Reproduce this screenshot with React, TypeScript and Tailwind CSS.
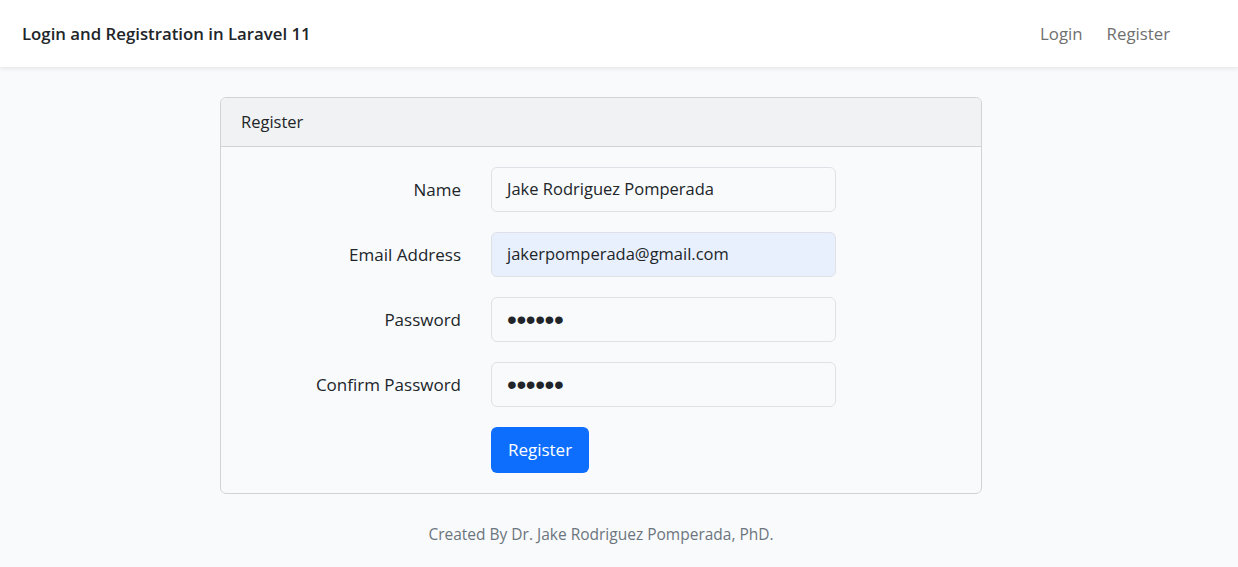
import React from "react";

const fields = [
  { label: "Name", value: "Jake Rodriguez Pomperada", bg: "bg-[#f8fafc]", dots: false },
  { label: "Email Address", value: "jakerpomperada@gmail.com", bg: "bg-[#e8f0fe]", dots: false },
  { label: "Password", value: "••••••", bg: "bg-[#f8fafc]", dots: true },
  { label: "Confirm Password", value: "••••••", bg: "bg-[#f8fafc]", dots: true },
];

export default function App() {
  return (
    <div className="min-h-[567px] bg-[#f8fafc] text-[16.5px] text-[#212529] font-['Open_Sans','Lato',sans-serif]">
      {/* navbar */}
      <nav className="h-[67px] w-full bg-white shadow-[0_2px_4px_rgba(0,0,0,0.08)] flex items-center">
        <div className="w-[1202px] flex items-center justify-between pl-[22px] pr-[32px]">
          <span className="text-[16.8px] font-semibold text-[#212529]">Login and Registration in Laravel 11</span>
          <div className="flex items-center gap-[24px] text-[#6f6f6f] text-[16.8px]">
            <span>Login</span>
            <span>Register</span>
          </div>
        </div>
      </nav>

      <main className="w-[1202px] pt-[30px]">
        <div className="ml-[220px] w-[762px] border border-[#d1d3d5] rounded-[6px] overflow-hidden">
          <div className="h-[49px] bg-[#f1f2f3] border-b border-[#d1d3d5] px-[20px] flex items-center">
            Register
          </div>
          <div className="px-[20px] pt-[20px] pb-[20px]">
            {fields.map((f) => (
              <div key={f.label} className="flex items-center mb-[20px]">
                <label className="w-[220px] text-right text-[17px]">{f.label}</label>
                <div
                  className={`ml-[30px] w-[345px] h-[45px] rounded-[6px] border border-[#dee2e6] flex items-center px-[15px] ${f.bg}`}
                >
                  {f.dots ? (
                    <span className="font-['Liberation_Sans',sans-serif] text-[28px] leading-none tracking-[-0.4px] pt-[1px]">
                      {f.value}
                    </span>
                  ) : (
                    f.value
                  )}
                </div>
              </div>
            ))}
            <div className="flex">
              <div className="w-[250px]" />
              <button className="w-[98px] h-[46px] rounded-[6px] bg-[#0d6efd] text-white text-[17px]">Register</button>
            </div>
          </div>
        </div>
        <p className="text-center text-[#6c757d] text-[15.5px] mt-[29px]">Created By Dr. Jake Rodriguez Pomperada, PhD.</p>
      </main>
    </div>
  );
}
